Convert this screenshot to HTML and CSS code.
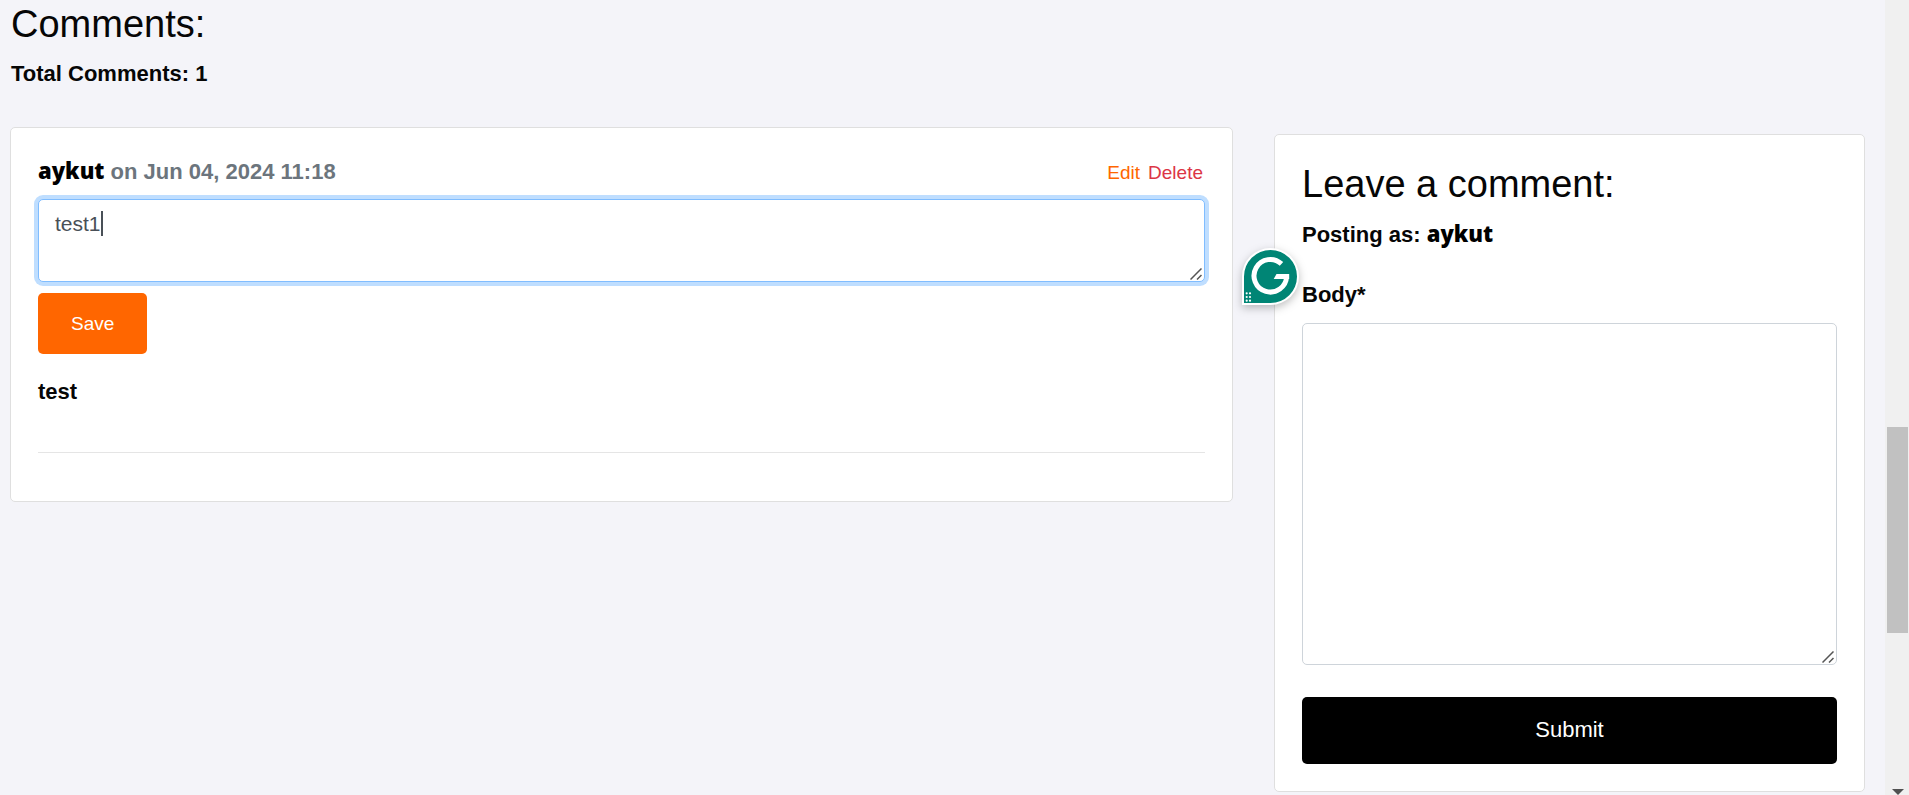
FILE: index.html
```html
<!DOCTYPE html>
<html lang="en">
<head>
<meta charset="utf-8">
<meta name="viewport" content="width=device-width, initial-scale=1">
<title>Comments</title>
<link rel="stylesheet" href="styles.css">
</head>
<body>
<main class="page">
  <header class="intro">
    <h2 class="title">Comments:</h2>
    <p class="line">Total Comments: 1</p>
  </header>
  <div class="columns">
    <section class="card comments" aria-label="Comments">
      <article class="comment">
        <div class="comment-head">
          <p class="line muted"><span class="author">aykut</span> on Jun 04, 2024 11:18</p>
          <nav class="actions">
            <a class="edit" href="#edit">Edit</a>
            <a class="delete" href="#delete">Delete</a>
          </nav>
        </div>
        <form class="edit-form">
          <div class="field">
            <textarea class="input input-edit" aria-label="Edit comment" rows="2">test1</textarea>
            <span class="caret" aria-hidden="true"></span>
            <svg class="grip" viewBox="0 0 12 12" aria-hidden="true"><path d="M0.5 11.5 11.5 0.5M7 11.5 11.5 7"/></svg>
          </div>
          <button class="button save" type="button">Save</button>
        </form>
        <p class="line comment-body">test</p>
      </article>
      <hr class="rule">
    </section>
    <aside class="card leave">
      <h2 class="title">Leave a comment:</h2>
      <p class="line posting">Posting as: <span class="author">aykut</span></p>
      <form>
        <label class="line label" for="body">Body*</label>
        <div class="field">
          <textarea class="input input-body" id="body"></textarea>
          <svg class="grip" viewBox="0 0 12 12" aria-hidden="true"><path d="M0.5 11.5 11.5 0.5M7 11.5 11.5 7"/></svg>
        </div>
        <button class="button submit" type="button">Submit</button>
      </form>
      <svg class="assistant" viewBox="0 0 57 57" role="img" aria-label="Writing assistant">
        <path fill="#fff" d="M28.500 0A28.500 28.500 0 0 1 28.500 57H0V28.500A28.500 28.500 0 0 1 28.500 0Z"/>
        <path fill="#008575" d="M28.500 2A26.500 26.500 0 0 1 28.500 55H2V28.500A26.500 26.500 0 0 1 28.500 2Z"/>
        <path fill="none" stroke="#fff" stroke-width="5" d="M39.500 15.900A16.300 16.300 0 1 0 44.600 28.500"/>
        <path fill="#fff" d="M34.500 26H47.200V31H31.700Z"/>
        <g fill="#fff"><circle cx="4.700" cy="45.300" r="1.100"/><circle cx="8" cy="45.300" r="1.100"/><circle cx="4.700" cy="49" r="1.100"/><circle cx="8" cy="49" r="1.100"/><circle cx="4.700" cy="52.700" r="1.100"/><circle cx="8" cy="52.700" r="1.100"/></g>
      </svg>
    </aside>
  </div>
</main>
<div class="scrollbar" aria-hidden="true">
  <div class="thumb"></div>
  <svg class="arrow" viewBox="0 0 12 6"><path d="M0 0H12L6 6Z"/></svg>
</div>
</body>
</html>
```

FILE: styles.css
```css
* { box-sizing: border-box; }

html { overflow: hidden; }

body {
  margin: 0;
  background: #f4f4f9;
  color: #060606;
  font: 22px/33px "Liberation Sans", Arial, sans-serif;
}

.page { padding: 0 44px 0 10px; }

.intro { padding: 2px 0 0 1px; margin-bottom: 37px; }

.title {
  margin: 0 0 12px;
  font-size: 38px;
  font-weight: 400;
  line-height: 44px;
}

.intro .title { margin-bottom: 11px; }

.line { margin: 0; font-size: 22px; font-weight: 700; }

.columns {
  display: grid;
  grid-template-columns: minmax(0, 1223fr) minmax(0, 591fr);
  gap: 41px;
  align-items: start;
}

.card {
  position: relative;
  padding: 27px;
  border: 1px solid #dfdfdf;
  border-radius: 5px;
  background: #fff;
}

.leave { margin-top: 7px; }

.comment-head {
  display: flex;
  justify-content: space-between;
  margin-bottom: 10px;
}

.muted { color: #6c757d; }

.author {
  color: #000;
  font-family: "Open Sans", "Liberation Sans", sans-serif;
  font-weight: 800;
  line-height: 1;
}

.actions { display: flex; gap: 8px; padding: 1px 2px 0 0; font-size: 19px; }
.actions a { text-decoration: none; }
.edit { color: #f60; }
.delete { color: #dc3545; }

.field { position: relative; }

.input {
  display: block;
  width: 100%;
  padding: 7px 16px;
  border: 1px solid #ced4da;
  border-radius: 5px;
  outline: 0;
  resize: none;
  background: #fff;
  color: #495057;
  font: 21px/33px "Liberation Sans", Arial, sans-serif;
}

.input-edit {
  height: 83px;
  border-color: #80bdff;
  box-shadow: 0 0 0 4px #bfdeff;
}

.input-body { height: 342px; }

.caret {
  position: absolute;
  top: 12px;
  left: 63px;
  width: 2px;
  height: 25px;
  background: #495057;
}

.grip {
  position: absolute;
  right: 3px;
  bottom: 2px;
  width: 12px;
  height: 12px;
  fill: none;
  stroke: #555;
  stroke-width: 1.5;
}

.button {
  border: 0;
  border-radius: 5px;
  color: #fff;
  font-family: "Liberation Sans", Arial, sans-serif;
}

.save {
  display: block;
  margin: 11px 0 21px;
  padding: 14px 33px;
  background: #f60;
  font-size: 19px;
  line-height: 33px;
}

.rule {
  height: 1px;
  margin: 44px 0 21px;
  border: 0;
  background: #e5e5e5;
}

.posting { margin-bottom: 27px; }
.label { display: block; margin-bottom: 12px; }

.submit {
  width: 100%;
  margin-top: 32px;
  padding: 16px 16px 18px;
  background: #000;
  font-size: 22px;
  line-height: 33px;
}

.assistant {
  position: absolute;
  top: 113px;
  left: -33px;
  width: 57px;
  height: 57px;
  overflow: visible;
  filter: drop-shadow(0 3px 4px rgba(0, 0, 0, 0.25));
}

.scrollbar {
  position: fixed;
  inset: 0 0 0 auto;
  width: 24px;
  background: #f0f0f0;
}

.thumb {
  position: absolute;
  top: 427px;
  left: 2px;
  width: 21px;
  height: 206px;
  background: #c1c1c1;
}

.arrow {
  position: absolute;
  bottom: 0;
  left: 7px;
  width: 12px;
  height: 6px;
  fill: #505050;
}
```
